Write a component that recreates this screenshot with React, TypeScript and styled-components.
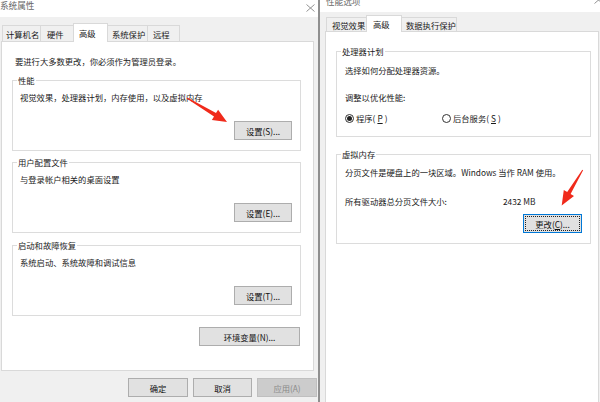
import React from 'react';
import styled, { createGlobalStyle } from 'styled-components';

const GlobalStyle = createGlobalStyle`
  html, body {
    margin: 0;
    padding: 0;
  }
  body {
    font-family: "Noto Sans CJK SC", "Microsoft YaHei", sans-serif;
    font-size: 8.3px;
    color: #1a1a1a;
  }
  * {
    box-sizing: border-box;
  }
`;

const Screen = styled.div`
  position: relative;
  width: 600px;
  height: 402px;
  display: flex;
  overflow: hidden;
  background: #f0f0f0;
`;

const Dialog = styled.div<{ $w: number; $edge?: boolean }>`
  flex: 0 0 ${p => p.$w}px;
  display: flex;
  flex-direction: column;
  background: #f0f0f0;
  border-left: ${p => (p.$edge ? '2px solid #8f8f8f' : 'none')};
`;

const TitleBar = styled.div<{ $h: number }>`
  flex: 0 0 ${p => p.$h}px;
  display: flex;
  justify-content: space-between;
  align-items: flex-start;
  background: #fff;
  overflow: hidden;
`;

const Title = styled.span<{ $shift: number; $ml: number }>`
  margin: ${p => p.$shift}px 0 0 ${p => p.$ml}px;
  line-height: 12px;
  font-size: 8.6px;
  color: #666;
`;

const CloseIcon = styled.svg<{ $mt: number; $mr: number }>`
  flex-shrink: 0;
  margin: ${p => p.$mt}px ${p => p.$mr}px 0 0;
`;

const TabStrip = styled.div<{ $mt: number; $h: number; $pl: number }>`
  position: relative;
  z-index: 1;
  flex: 0 0 ${p => p.$h}px;
  display: flex;
  align-items: flex-end;
  margin-top: ${p => p.$mt}px;
  padding-left: ${p => p.$pl}px;
`;

const Tab = styled.div<{ $w: number; $h: number; $pl?: number; $active?: boolean }>`
  flex: 0 0 ${p => p.$w}px;
  height: ${p => p.$h}px;
  margin-right: -1px;
  margin-bottom: ${p => (p.$active ? '-1px' : '0')};
  padding-left: ${p => p.$pl ?? 4}px;
  display: flex;
  align-items: center;
  white-space: nowrap;
  background: ${p => (p.$active ? '#fff' : '#f0f0f0')};
  border: 1px solid #d9d9d9;
  border-bottom: none;
  position: relative;
  z-index: ${p => (p.$active ? 2 : 1)};
`;

const Panel = styled.div<{ $h?: number; $ml: number; $mr: number }>`
  ${p => (p.$h ? `flex: 0 0 ${p.$h}px;` : 'flex: 1; margin-bottom: -2px;')}
  margin-left: ${p => p.$ml}px;
  margin-right: ${p => p.$mr}px;
  display: flex;
  flex-direction: column;
  background: #fff;
  border: 1px solid #d9d9d9;
`;

const Line = styled.div<{ $mt: number; $ml: number }>`
  margin-top: ${p => p.$mt}px;
  margin-left: ${p => p.$ml}px;
  line-height: 12px;
  white-space: nowrap;
`;

const Group = styled.div<{ $h: number; $mt: number; $ml: number; $mr: number }>`
  flex: 0 0 ${p => p.$h}px;
  margin: ${p => p.$mt}px ${p => p.$mr}px 0 ${p => p.$ml}px;
  display: flex;
  flex-direction: column;
  border: 1px solid #dcdcdc;
`;

const GroupLabel = styled.div`
  align-self: flex-start;
  margin: -7px 0 0 4px;
  padding: 0 1px;
  line-height: 12px;
  background: #fff;
`;

const Button = styled.button<{ $w: number; $focus?: boolean }>`
  flex-shrink: 0;
  width: ${p => p.$w}px;
  height: 19px;
  padding: 0;
  font-family: inherit;
  font-size: 8.3px;
  color: #111;
  background: #e1e1e1;
  border: 1px solid ${p => (p.$focus ? '#0078d7' : '#adadad')};
  outline: ${p => (p.$focus ? '1px dotted #222' : 'none')};
  outline-offset: -3px;

  &:disabled {
    color: #8a8a8a;
    background: #cccccc;
    border-color: #bfbfbf;
  }
`;

const GroupButton = styled(Button)`
  align-self: flex-end;
  margin: auto 8px 10px 0;
`;

const EnvButton = styled(Button)`
  align-self: flex-end;
  margin: 11px 13px 0 0;
`;

const Footer = styled.div`
  display: flex;
  justify-content: flex-end;
  gap: 5px;
  margin-top: 7px;
  padding-right: 1px;
`;

const RadioRow = styled.div<{ $mt: number }>`
  display: flex;
  align-items: center;
  margin: ${p => p.$mt}px 0 0 8px;
  line-height: 12px;
`;

const RadioItem = styled.label<{ $w?: number }>`
  display: flex;
  align-items: center;
  gap: 2px;
  ${p => (p.$w ? `width: ${p.$w}px;` : '')}
`;

const RadioDot = styled.span<{ $on?: boolean }>`
  width: 9px;
  height: 9px;
  border-radius: 50%;
  border: 1px solid #333;
  display: flex;
  align-items: center;
  justify-content: center;

  &::after {
    content: '';
    width: 5px;
    height: 5px;
    border-radius: 50%;
    background: ${p => (p.$on ? '#222' : 'transparent')};
  }
`;

const SizeRow = styled.div`
  display: flex;
  margin: 17px 0 0 8px;
  line-height: 12px;
`;

const SizeLabel = styled.span`
  width: 158px;
`;

const Key = styled.span`
  text-decoration: underline;
`;

const Arrows = styled.svg`
  position: absolute;
  left: 0;
  top: 0;
  pointer-events: none;
`;

const Close: React.FC<{ mt: number; mr: number }> = ({ mt, mr }) => (
  <CloseIcon $mt={mt} $mr={mr} width="9" height="8" viewBox="0 0 9 8">
    <path d="M0.5 0.5 L8.5 7.5 M8.5 0.5 L0.5 7.5" stroke="#888" strokeWidth="0.9" fill="none" />
  </CloseIcon>
);

const SystemProperties: React.FC = () => (
  <Dialog $w={318}>
    <TitleBar $h={17}>
      <Title $shift={-1} $ml={0}>系统属性</Title>
      <Close mt={4} mr={3} />
    </TitleBar>
    <TabStrip $mt={6} $h={18} $pl={2}>
      <Tab $w={39} $h={16} $pl={3}>计算机名</Tab>
      <Tab $w={34} $h={16} $pl={6}>硬件</Tab>
      <Tab $w={35} $h={19} $pl={5} $active>高级</Tab>
      <Tab $w={41} $h={16}>系统保护</Tab>
      <Tab $w={33} $h={16} $pl={5}>远程</Tab>
    </TabStrip>
    <Panel $h={330} $ml={1} $mr={4}>
      <Line $mt={13} $ml={13}>要进行大多数更改，你必须作为管理员登录。</Line>

      <Group $h={71} $mt={13} $ml={10} $mr={12}>
        <GroupLabel>性能</GroupLabel>
        <Line $mt={5} $ml={7}>视觉效果，处理器计划，内存使用，以及虚拟内存</Line>
        <GroupButton $w={58}>设置(S)...</GroupButton>
      </Group>

      <Group $h={71} $mt={11} $ml={10} $mr={12}>
        <GroupLabel>用户配置文件</GroupLabel>
        <Line $mt={5} $ml={7}>与登录帐户相关的桌面设置</Line>
        <GroupButton $w={58}>设置(E)...</GroupButton>
      </Group>

      <Group $h={71} $mt={12} $ml={10} $mr={12}>
        <GroupLabel>启动和故障恢复</GroupLabel>
        <Line $mt={5} $ml={7}>系统启动、系统故障和调试信息</Line>
        <GroupButton $w={58}>设置(T)...</GroupButton>
      </Group>

      <EnvButton $w={101}>环境变量(N)...</EnvButton>
    </Panel>
    <Footer>
      <Button $w={60}>确定</Button>
      <Button $w={59}>取消</Button>
      <Button $w={60} disabled>应用(A)</Button>
    </Footer>
  </Dialog>
);

const PerformanceOptions: React.FC = () => (
  <Dialog $w={282} $edge>
    <TitleBar $h={12}>
      <Title $shift={-5} $ml={6}>性能选项</Title>
      <Close mt={-4} mr={-3} />
    </TitleBar>
    <TabStrip $mt={3} $h={16} $pl={6}>
      <Tab $w={41} $h={14} $pl={5}>视觉效果</Tab>
      <Tab $w={36} $h={17} $pl={6} $active>高级</Tab>
      <Tab $w={56} $h={14} $pl={4}>数据执行保护</Tab>
    </TabStrip>
    <Panel $ml={5} $mr={1}>
      <Group $h={86} $mt={19} $ml={10} $mr={7}>
        <GroupLabel>处理器计划</GroupLabel>
        <Line $mt={7} $ml={8}>选择如何分配处理器资源。</Line>
        <Line $mt={15} $ml={8}>调整以优化性能:</Line>
        <RadioRow $mt={9}>
          <RadioItem $w={97}>
            <RadioDot $on />
            程序(<Key>P</Key>)
          </RadioItem>
          <RadioItem>
            <RadioDot />
            后台服务(<Key>S</Key>)
          </RadioItem>
        </RadioRow>
      </Group>

      <Group $h={90} $mt={17} $ml={10} $mr={7}>
        <GroupLabel>虚拟内存</GroupLabel>
        <Line $mt={6} $ml={8}>分页文件是硬盘上的一块区域。Windows 当作 RAM 使用。</Line>
        <SizeRow>
          <SizeLabel>所有驱动器总分页文件大小:</SizeLabel>
          <span>2432 MB</span>
        </SizeRow>
        <GroupButton $w={59} $focus>
          更改(<Key>C</Key>)...
        </GroupButton>
      </Group>
    </Panel>
  </Dialog>
);

const App: React.FC = () => (
  <>
    <GlobalStyle />
    <Screen>
      <SystemProperties />
      <PerformanceOptions />
      <Arrows width="600" height="402" viewBox="0 0 600 402">
        <polygon
          points="187.3,97.6 216,113.1 218.1,109.7 227,122 211.9,119.9 214,116.5 186.7,98.4"
          fill="#f02a1b"
        />
        <polygon
          points="583.1,170.3 570.6,194 574,196.1 561.7,205.5 563.8,189.9 567.2,192 582.3,169.7"
          fill="#f02a1b"
        />
      </Arrows>
    </Screen>
  </>
);

export default App;
